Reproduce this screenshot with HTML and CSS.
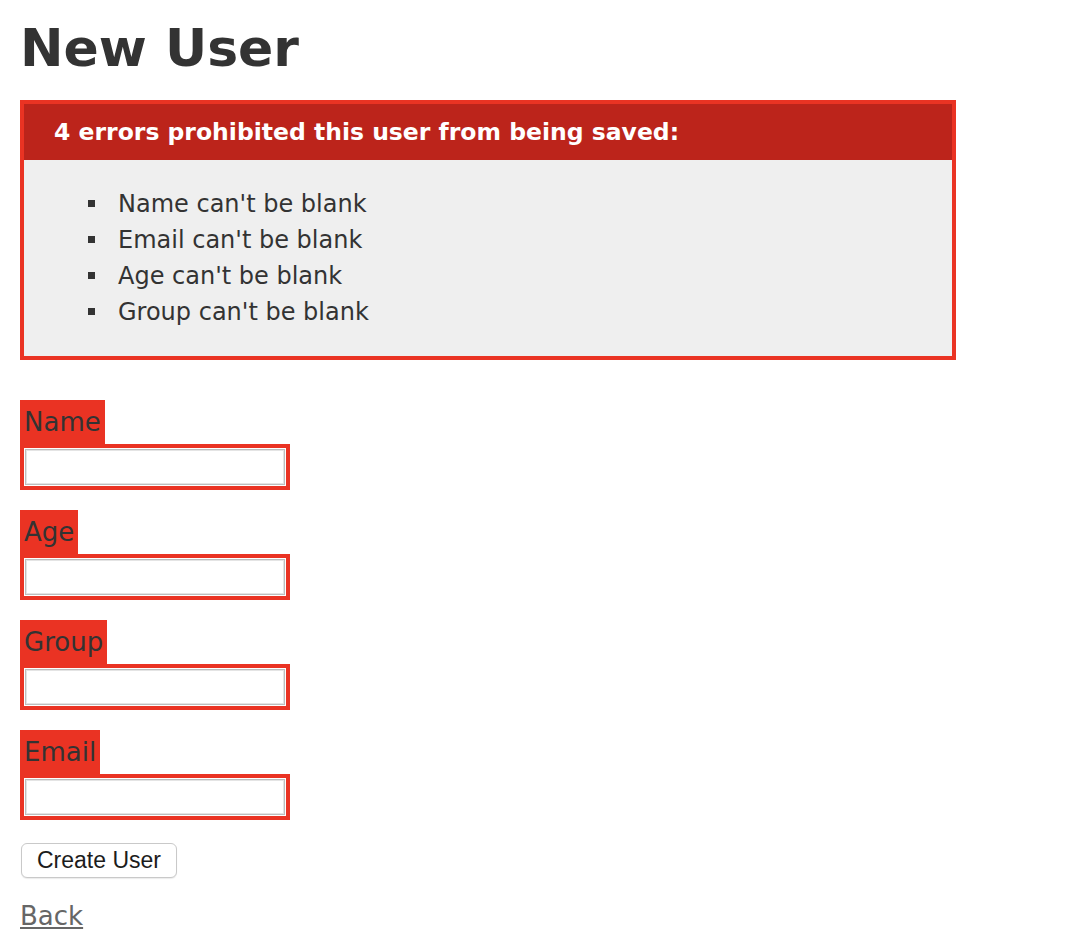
FILE: index.html
```html
<!DOCTYPE html>
<html>
<head>
<meta charset="utf-8">
<link rel="stylesheet" href="styles.css">
<title>New User</title>
</head>
<body>
<h1 class="title">New User</h1>
<form class="user-form">
  <div class="error-explanation">
    <h2 class="error-title">4 errors prohibited this user from being saved:</h2>
    <ul class="error-list">
      <li>Name can't be blank</li>
      <li>Email can't be blank</li>
      <li>Age can't be blank</li>
      <li>Group can't be blank</li>
    </ul>
  </div>

  <div class="field">
    <div class="with-errors"><label class="label">Name</label></div>
    <div class="with-errors"><input class="text-input" type="text"></div>
  </div>
  <div class="field">
    <div class="with-errors"><label class="label">Age</label></div>
    <div class="with-errors"><input class="text-input" type="text"></div>
  </div>
  <div class="field">
    <div class="with-errors"><label class="label">Group</label></div>
    <div class="with-errors"><input class="text-input" type="text"></div>
  </div>
  <div class="field">
    <div class="with-errors"><label class="label">Email</label></div>
    <div class="with-errors"><input class="text-input" type="text"></div>
  </div>
  <div class="actions">
    <button class="submit" type="button">Create User</button>
  </div>
</form>
<a class="back-link" href="#">Back</a>
</body>
</html>
```

FILE: styles.css
```css
html, body {
  background: #fff;
}
body {
  margin: 0 20px;
  color: #333;
  font-family: "DejaVu Sans", Verdana, sans-serif;
  font-size: 26px;
  line-height: 36px;
}
.title {
  margin: 30px 0 34px;
  font-size: 52px;
  line-height: 36px;
  font-weight: bold;
  color: #333;
}
.user-form {
  margin: 0;
}
.error-explanation {
  width: 900px;
  border: 4px solid #ea3323;
  padding: 14px 14px 0;
  margin-bottom: 40px;
  background: #efefef;
}
.error-title {
  margin: -14px -14px 0;
  padding: 10px 10px 10px 30px;
  font-size: 23.5px;
  line-height: 36px;
  font-weight: bold;
  background: #bc241b;
  color: #fff;
}
.error-list {
  margin: 26px 0;
  padding-left: 80px;
  list-style: none;
}
.error-list li {
  font-size: 24px;
  line-height: 36px;
}
.error-list li::before {
  content: "";
  display: inline-block;
  width: 7px;
  height: 7px;
  margin-left: -30px;
  margin-right: 23px;
  vertical-align: 5px;
  background: #333;
}
.field {
  margin-bottom: 20px;
}
.with-errors {
  display: table;
  padding: 4px;
  background: #ea3323;
}
.label {
  display: block;
  color: #333;
  line-height: 37px;
  margin-bottom: -1px;
}
.text-input {
  display: block;
  box-sizing: border-box;
  width: 262px;
  height: 38px;
  margin: 0;
  padding: 0 4px;
  border: 1px solid #fff;
  box-shadow: inset 0 0 0 1px #bdbdbd, inset 0 0 0 2px #e4e4e4;
  background: #fff;
  outline: none;
}
.actions {
  margin-bottom: 20px;
  padding-top: 3px;
}
.submit {
  display: block;
  box-sizing: border-box;
  width: 156px;
  height: 35px;
  margin: 0 0 0 1px;
  padding: 0;
  border: 1px solid #c9c9c9;
  border-radius: 6px;
  background: #fff;
  box-shadow: 0 1px 1px rgba(0,0,0,0.08);
  color: #1c1c1c;
  font-family: "Liberation Sans", Arial, sans-serif;
  font-size: 23px;
  line-height: 33px;
}
.back-link {
  color: #666;
  font-size: 26px;
  line-height: 36px;
  text-decoration: underline;
}
```
